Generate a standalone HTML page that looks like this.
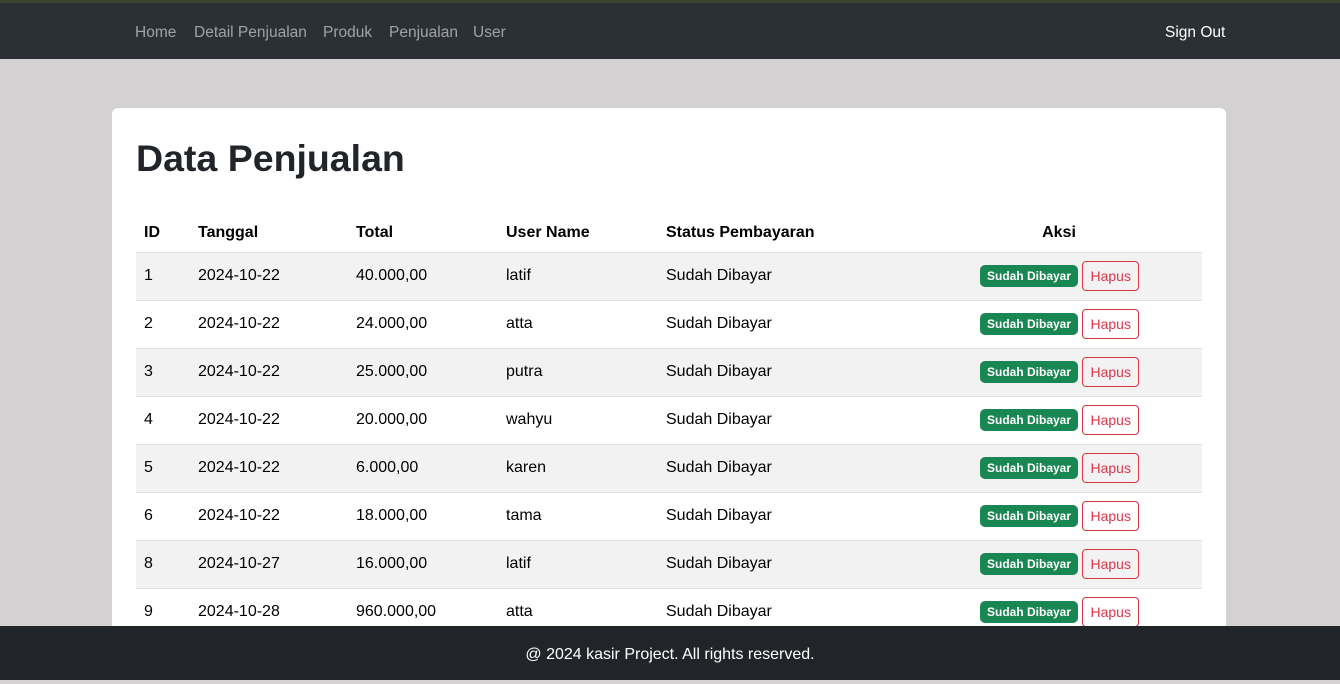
<!DOCTYPE html>
<html><head><style>
*{box-sizing:border-box;margin:0;padding:0}
body{width:1340px;height:680px;overflow:hidden;background:#d3d1d2;font-family:"Liberation Sans",sans-serif;color:#212529;position:relative}
.top{height:3px;background:#3d4431}
nav{height:56px;background:#2b3035;position:relative}
nav a{position:absolute;top:21px;font-size:15.5px;color:rgba(255,255,255,.55);text-decoration:none}
.card{position:absolute;left:112px;top:108px;width:1114px;height:560px;background:#fff;border-radius:6px}
h1{position:absolute;left:24px;top:29px;font-size:37.5px;font-weight:bold;color:#212529}
table{position:absolute;left:24px;top:104px;width:1066px;border-collapse:collapse;font-size:16px;table-layout:fixed}
th{height:40px;text-align:left;font-weight:bold;color:#000;border-bottom:1px solid #dee2e6;padding:2px 8px 0;vertical-align:middle}
td{height:48px;padding:0 8px;border-bottom:1px solid #dee2e6;vertical-align:middle;color:#000}
tr.s td{background:#f2f2f2}
td.a{padding-left:64px;white-space:nowrap}
.b{display:inline-block;background:#198754;color:#fff;font-size:12px;font-weight:bold;padding:4px 7px;border-radius:5px;vertical-align:middle}
.h{display:inline-block;border:1px solid #dc3545;color:#dc3545;font-size:14px;padding:6px 7px;border-radius:4px;vertical-align:middle;margin-left:0}
footer{position:absolute;left:0;top:626px;width:1340px;height:54px;background:#212529;color:#fff;text-align:center;line-height:58px;font-size:16px}
</style></head><body>
<div class="top"></div>
<nav>
<a style="left:135px">Home</a><a style="left:194px">Detail Penjualan</a><a style="left:323px">Produk</a><a style="left:389px">Penjualan</a><a style="left:473px">User</a>
<a style="left:1165px;color:#fff">Sign Out</a>
</nav>
<div class="card">
<h1>Data Penjualan</h1>
<table>
<colgroup><col style="width:54px"><col style="width:158px"><col style="width:150px"><col style="width:160px"><col style="width:258px"><col style="width:286px"></colgroup>
<tr><th>ID</th><th>Tanggal</th><th>Total</th><th>User Name</th><th>Status Pembayaran</th><th style="text-align:center">Aksi</th></tr>
<tr class="s"><td>1</td><td>2024-10-22</td><td>40.000,00</td><td>latif</td><td>Sudah Dibayar</td><td class="a"><span class="b">Sudah Dibayar</span> <span class="h">Hapus</span></td></tr>
<tr><td>2</td><td>2024-10-22</td><td>24.000,00</td><td>atta</td><td>Sudah Dibayar</td><td class="a"><span class="b">Sudah Dibayar</span> <span class="h">Hapus</span></td></tr>
<tr class="s"><td>3</td><td>2024-10-22</td><td>25.000,00</td><td>putra</td><td>Sudah Dibayar</td><td class="a"><span class="b">Sudah Dibayar</span> <span class="h">Hapus</span></td></tr>
<tr><td>4</td><td>2024-10-22</td><td>20.000,00</td><td>wahyu</td><td>Sudah Dibayar</td><td class="a"><span class="b">Sudah Dibayar</span> <span class="h">Hapus</span></td></tr>
<tr class="s"><td>5</td><td>2024-10-22</td><td>6.000,00</td><td>karen</td><td>Sudah Dibayar</td><td class="a"><span class="b">Sudah Dibayar</span> <span class="h">Hapus</span></td></tr>
<tr><td>6</td><td>2024-10-22</td><td>18.000,00</td><td>tama</td><td>Sudah Dibayar</td><td class="a"><span class="b">Sudah Dibayar</span> <span class="h">Hapus</span></td></tr>
<tr class="s"><td>8</td><td>2024-10-27</td><td>16.000,00</td><td>latif</td><td>Sudah Dibayar</td><td class="a"><span class="b">Sudah Dibayar</span> <span class="h">Hapus</span></td></tr>
<tr><td>9</td><td>2024-10-28</td><td>960.000,00</td><td>atta</td><td>Sudah Dibayar</td><td class="a"><span class="b">Sudah Dibayar</span> <span class="h">Hapus</span></td></tr>
</table>
</div>
<footer>@ 2024 kasir Project. All rights reserved.</footer>
</body></html>
